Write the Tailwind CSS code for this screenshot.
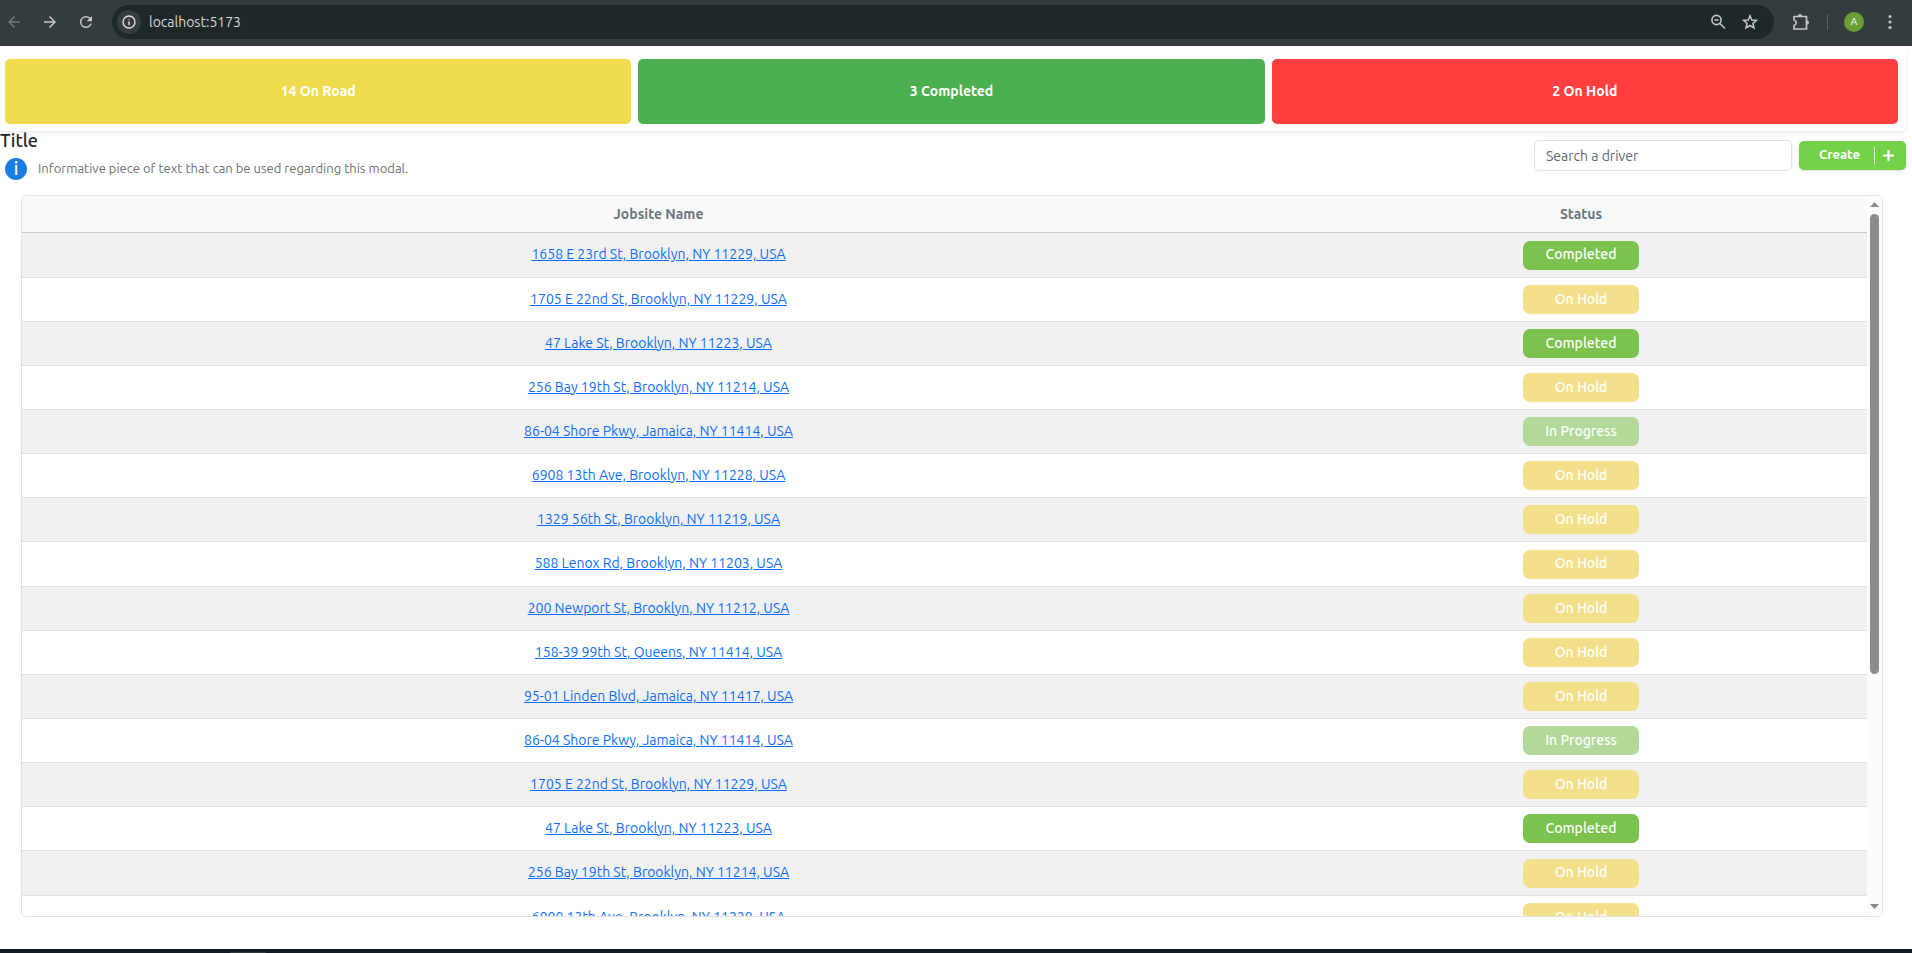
<!DOCTYPE html>
<html lang="en">
<head>
<meta charset="utf-8">
<title>Jobsites</title>
<script src="https://cdn.jsdelivr.net/npm/@tailwindcss/browser@4"></script>
</head>
<body class="flex h-screen flex-col overflow-hidden bg-white font-['Ubuntu','Noto_Sans',sans-serif] text-sm text-[#212529]">

<header class="flex h-[46px] shrink-0 items-center bg-[#353c3f] pr-3.5 pb-0.5 text-[#c3c7c9]">
  <button aria-label="Back" class="ml-1 flex size-5 items-center justify-center text-[#72797c]">
    <svg class="size-[18px]" viewBox="0 0 24 24" fill="currentColor"><path d="M20 11H7.8l5.6-5.6L12 4l-8 8 8 8 1.4-1.4L7.8 13H20z"/></svg>
  </button>
  <button aria-label="Forward" class="ml-4 flex size-5 items-center justify-center">
    <svg class="size-[18px]" viewBox="0 0 24 24" fill="currentColor"><path d="M4 11h12.200l-5.600-5.600L12 4l8 8-8 8-1.400-1.400 5.600-5.600H4z"/></svg>
  </button>
  <button aria-label="Reload" class="ml-4 flex size-5 items-center justify-center">
    <svg class="size-[18px]" viewBox="0 0 24 24" fill="currentColor"><path d="M17.650 6.350A8 8 0 1 0 19.730 14h-2.080A6 6 0 1 1 12 6c1.660 0 3.140.690 4.220 1.780L13 11h7V4z"/></svg>
  </button>
  <div class="ml-4 flex h-[34px] flex-1 items-center rounded-full bg-[#1f2729] pr-4 pl-[5px]">
    <button aria-label="Site information" class="flex size-6 items-center justify-center rounded-full bg-[#353c3f] text-[#e3e3e3]">
      <svg class="size-4" viewBox="0 0 24 24" fill="currentColor"><path d="M11 17h2v-6h-2zM12 9a1 1 0 1 0 0-2 1 1 0 0 0 0 2zM12 2a10 10 0 1 0 0 20 10 10 0 0 0 0-20zm0 18a8 8 0 1 1 0-16 8 8 0 0 1 0 16z"/></svg>
    </button>
    <input aria-label="Address" value="localhost:5173" class="ml-2 flex-1 bg-transparent text-sm text-[#d5d8da] outline-none">
    <button aria-label="Zoom" class="mr-4 flex size-4 items-center justify-center">
      <svg class="size-4" viewBox="0 0 16 16" fill="none" stroke="currentColor" stroke-width="1.600"><circle cx="6.500" cy="6" r="4.600"/><path d="M4.500 6h4M10 9.500l5 5"/></svg>
    </button>
    <button aria-label="Bookmark" class="flex size-4 items-center justify-center">
      <svg class="size-4" viewBox="0 0 16 16" fill="none" stroke="currentColor" stroke-width="1.500"><path d="M8 1.800l1.800 4.200 4.600.4-3.500 3 1.050 4.500L8 11.500l-3.950 2.400L5.100 9.400 1.600 6.400l4.600-.4z"/></svg>
    </button>
  </div>
  <button aria-label="Extensions" class="ml-[18px] flex size-[18px] items-center justify-center">
    <svg class="size-[18px]" viewBox="0 0 18 18"><path fill="none" stroke="currentColor" stroke-width="1.700" stroke-linejoin="round" d="M2 3.500h12.500v12.500H2v-3.500c3-1 3-4.500 0-5.500z"/><path fill="currentColor" d="M6 3a2 2 0 0 1 4 0zM15 7.500a2 2 0 0 1 0 4z"/></svg>
  </button>
  <span class="ml-[17px] h-4 w-px bg-[#5a6164]"></span>
  <button aria-label="Profile" class="ml-4 flex size-5 items-center justify-center rounded-full bg-[#689f38] text-[10px] text-white">A</button>
  <button aria-label="Menu" class="ml-[18px] flex size-4 items-center justify-center">
    <svg class="size-4" viewBox="0 0 16 16" fill="currentColor"><circle cx="8" cy="2.500" r="1.600"/><circle cx="8" cy="8" r="1.600"/><circle cx="8" cy="13.500" r="1.600"/></svg>
  </button>
</header>

<section class="mr-1.5 grid shrink-0 grid-cols-3 gap-[7px] rounded-md pt-[13px] pr-2 pb-[7px] pl-[5px] shadow-[0_2px_4px_rgba(0,0,0,0.08)]">
  <div class="flex h-[65px] items-center justify-center rounded-[5px] bg-[#f0db4f] pb-0.5 font-bold text-white">14 On Road</div>
  <div class="flex h-[65px] items-center justify-center rounded-[5px] bg-[#4caf50] pb-0.5 font-bold text-white">3 Completed</div>
  <div class="flex h-[65px] items-center justify-center rounded-[5px] bg-[#ff3f3f] pb-0.5 font-bold text-white">2 On Hold</div>
</section>

<section class="flex h-[49px] shrink-0 items-start justify-between pr-1.5">
  <div>
    <h1 class="text-lg leading-[18px] font-medium">Title</h1>
    <div class="mt-[9px] ml-[5px] flex items-center gap-[11px]">
      <span class="flex size-[22px] items-center justify-center rounded-full bg-[#1a7ce2] pb-0.5 text-lg leading-none font-medium text-white">i</span>
      <p class="pb-0.5 text-[13px] leading-5 text-[#6c6f72]">Informative piece of text that can be used regarding this modal.</p>
    </div>
  </div>
  <div class="mt-[9px] flex items-center gap-[7px]">
    <input type="text" aria-label="Search a driver" placeholder="Search a driver" class="h-[31px] w-[258px] rounded-[5px] border border-[#dee2e6] px-[11px] text-sm placeholder:text-[#62676b]">
    <button class="flex h-[29px] w-[107px] items-center rounded-[5px] bg-[#73d14a] pr-3 pl-5 text-[13px] font-semibold text-white shadow-sm">
      <span class="flex-1 pb-0.5 text-left">Create</span>
      <span class="mr-2 h-[17px] w-px bg-white/80"></span>
      <svg class="size-[11px]" viewBox="0 0 11 11" stroke="#fff" stroke-width="2.200" stroke-linecap="round"><path d="M5.500 1v9M1 5.500h9"/></svg>
    </button>
  </div>
</section>

<main class="mt-[15px] mr-[29px] mb-8 ml-[21px] flex min-h-0 flex-1 overflow-hidden rounded-[5px] border border-[#dee2e6]">
  <div class="flex-1 overflow-y-auto [scrollbar-width:none]">
    <table class="w-full table-fixed border-separate border-spacing-0 text-center">
      <thead>
        <tr class="h-[37px] bg-[#f8f9fb] text-[#6c757d]">
          <th class="w-[69%] border-b border-[#c4c8cb] font-bold">Jobsite Name</th>
          <th class="border-b border-[#c4c8cb] font-bold">Status</th>
        </tr>
      </thead>
      <tbody id="rows"></tbody>
    </table>
  </div>
  <div class="flex w-[15px] flex-col items-center bg-[#fcfcfc] pt-1.5 pb-[7px]">
    <svg class="h-[5px] w-[9px] shrink-0" viewBox="0 0 9 5" fill="#8b8b8b"><path d="M0 5h9L4.500 0z"/></svg>
    <div class="mt-[7px] h-[65%] w-[9px] rounded-full bg-[#8b8b8b]"></div>
    <svg class="mt-auto h-[5px] w-[9px] shrink-0" viewBox="0 0 9 5" fill="#8b8b8b"><path d="M0 0h9L4.500 5z"/></svg>
  </div>
</main>

<footer class="h-1 shrink-0 bg-[#101a20] pt-[3px]"><div class="ml-[230px] h-px w-9 bg-[#30383c]"></div></footer>

<script>
const jobs = [
  ["1658 E 23rd St, Brooklyn, NY 11229, USA", "Completed"],
  ["1705 E 22nd St, Brooklyn, NY 11229, USA", "On Hold"],
  ["47 Lake St, Brooklyn, NY 11223, USA", "Completed"],
  ["256 Bay 19th St, Brooklyn, NY 11214, USA", "On Hold"],
  ["86-04 Shore Pkwy, Jamaica, NY 11414, USA", "In Progress"],
  ["6908 13th Ave, Brooklyn, NY 11228, USA", "On Hold"],
  ["1329 56th St, Brooklyn, NY 11219, USA", "On Hold"],
  ["588 Lenox Rd, Brooklyn, NY 11203, USA", "On Hold"],
  ["200 Newport St, Brooklyn, NY 11212, USA", "On Hold"],
  ["158-39 99th St, Queens, NY 11414, USA", "On Hold"],
  ["95-01 Linden Blvd, Jamaica, NY 11417, USA", "On Hold"],
  ["86-04 Shore Pkwy, Jamaica, NY 11414, USA", "In Progress"],
  ["1705 E 22nd St, Brooklyn, NY 11229, USA", "On Hold"],
  ["47 Lake St, Brooklyn, NY 11223, USA", "Completed"],
  ["256 Bay 19th St, Brooklyn, NY 11214, USA", "On Hold"],
  ["6908 13th Ave, Brooklyn, NY 11228, USA", "On Hold"],
];
const colours = { "Completed": "bg-[#7bc24f]", "On Hold": "bg-[#f4df8b]", "In Progress": "bg-[#b2d99a]" };
document.getElementById("rows").innerHTML = jobs.map(([name, status]) => `
  <tr class="h-11 odd:bg-[#f1f1f1] nth-[7n+1]:h-[45px]">
    <td class="border-b border-[#dee2e6] pb-0.5"><a href="#" class="text-[#0d6efd] underline">${name}</a></td>
    <td class="border-b border-[#dee2e6]"><span class="mx-auto flex h-[29px] w-[116px] items-center justify-center rounded-[7px] pb-0.5 font-medium text-white ${colours[status]}">${status}</span></td>
  </tr>`).join("");
</script>
</body>
</html>
